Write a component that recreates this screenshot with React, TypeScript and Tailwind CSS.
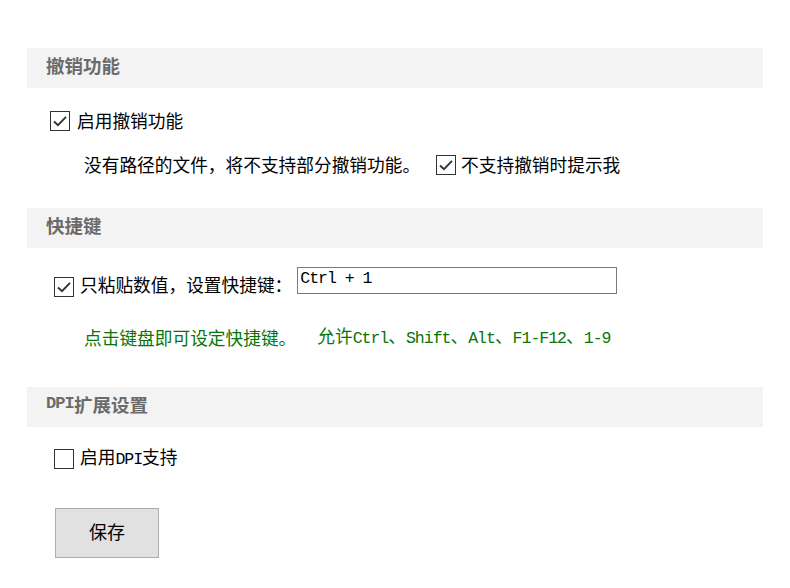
import React from 'react';

const cjk = "font-['Noto_Sans_CJK_SC','Noto_Sans',sans-serif]";
const mono = "font-['Liberation_Mono','Noto_Sans_CJK_SC',monospace] text-[16.5px] tracking-[-1px]";

function Box({ checked }: { checked: boolean }) {
  return (
    <span className="flex h-[20px] w-[20px] shrink-0 items-center justify-center border border-[#333333] bg-white">
      {checked && (
        <svg width="18" height="18" viewBox="0 0 18 18" fill="none">
          <path d="M3 9.5 L7 13.2 L15 4.8" stroke="#333333" strokeWidth="1.9" />
        </svg>
      )}
    </span>
  );
}

function Header({ children }: { children: React.ReactNode }) {
  return (
    <div className="flex h-[40px] items-center bg-[#f3f3f3] pb-[6px] pl-[19px] text-[18.5px] font-bold text-[#6b6b6b]">
      {children}
    </div>
  );
}

export default function App() {
  return (
    <div className={`${cjk} min-h-[588px] w-[790px] bg-white text-[17.7px] leading-[20px] text-black`}>
      <div className="ml-[27px] w-[736px] pt-[48px]">
        {/* 撤销功能 */}
        <Header>撤销功能</Header>
        <div className="mt-[18px] flex h-[30px] items-center pl-[23px]">
          <Box checked />
          <span className="ml-[7px] pb-[3px]">启用撤销功能</span>
        </div>
        <div className="mt-[14px] flex h-[30px] items-center pl-[57px]">
          <span className="pb-[3px]">没有路径的文件，将不支持部分撤销功能。</span>
          <span className="ml-[16px]">
            <Box checked />
          </span>
          <span className="ml-[5px] pb-[3px]">不支持撤销时提示我</span>
        </div>

        {/* 快捷键 */}
        <div className="mt-[28px]">
          <Header>快捷键</Header>
        </div>
        <div className="mt-[19px] flex items-start pl-[27px]">
          <span className="mt-[10px]">
            <Box checked />
          </span>
          <span className="ml-[6px] mt-[7px]">只粘贴数值，设置快捷键：</span>
          <div className="ml-[5px] flex h-[27px] w-[320px] items-center border border-[#7a7a7a] bg-white pb-[4px] pl-[2px]">
            <span className={`${mono} whitespace-pre leading-[20px]`}>Ctrl + 1</span>
          </div>
        </div>
        <div className="mt-[25px] flex h-[30px] items-center pl-[57px] text-[#087508]">
          <span>点击键盘即可设定快捷键。</span>
          <span className="ml-[21px]">
            允许<span className={mono}>Ctrl</span>、<span className={mono}>Shift</span>、<span className={mono}>Alt</span>、<span className={mono}>F1-F12</span>、<span className={mono}>1-9</span>
          </span>
        </div>

        {/* DPI扩展设置 */}
        <div className="mt-[35px]">
          <Header>
            <span className="font-['Liberation_Mono',monospace] text-[17px] tracking-[-0.9px]">DPI</span>扩展设置
          </Header>
        </div>
        <div className="mt-[17px] flex h-[30px] items-center pl-[27px]">
          <Box checked={false} />
          <span className="ml-[6px] pb-[3px]">
            启用<span className={mono}>DPI</span>支持
          </span>
        </div>

        <div className="mt-[34px] pl-[28px]">
          <button className="flex h-[50px] w-[104px] items-center justify-center border border-[#adadad] bg-[#e1e1e1] pb-[4px] text-[18px] text-black">
            保存
          </button>
        </div>
      </div>
    </div>
  );
}
